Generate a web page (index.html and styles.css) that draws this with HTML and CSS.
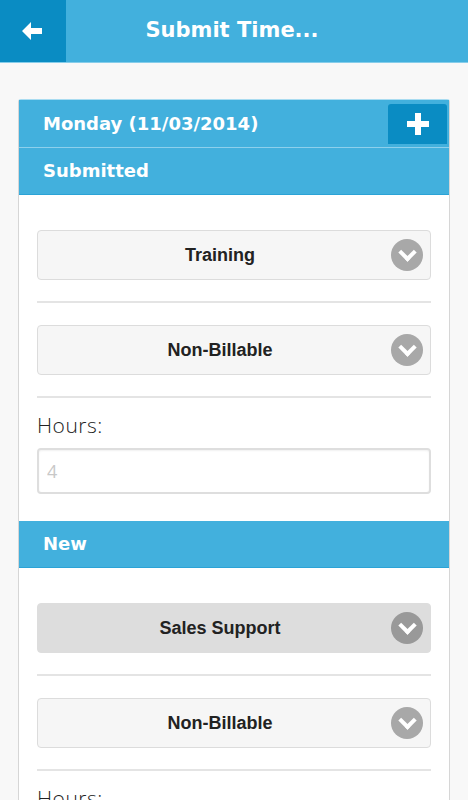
FILE: index.html
```html
<!DOCTYPE html>
<html lang="en">
<head>
  <meta charset="UTF-8" />
  <meta name="viewport" content="width=device-width, initial-scale=1.0" />
  <title>Submit Time</title>
  <link rel="stylesheet" href="styles.css">
</head>
<body>
  <header class="topbar">
    <a class="back" href="#">
      <svg width="22" height="20" viewBox="0 0 22 20"><path d="M10 1 L1 10 L10 19 L10 13 L21 13 L21 7 L10 7 Z" fill="#fff"/></svg>
    </a>
    <h1>Submit Time...</h1>
  </header>

  <div class="card">
    <div class="day">
      <span>Monday (11/03/2014)</span>
      <button class="add">
        <svg width="22" height="22" viewBox="0 0 22 22"><path d="M8 0h6v8h8v6h-8v8H8v-8H0V8h8z" fill="#fff"/></svg>
      </button>
    </div>

    <div class="section">Submitted</div>
    <div class="entry">
      <div class="select"><span>Training</span><i class="chev"></i></div>
      <hr>
      <div class="select"><span>Non-Billable</span><i class="chev"></i></div>
      <hr class="before-hours">
      <label class="hours">Hours:</label>
      <input class="field" type="text" placeholder="4">
    </div>

    <div class="section">New</div>
    <div class="entry">
      <div class="select active"><span>Sales Support</span><i class="chev"></i></div>
      <hr>
      <div class="select"><span>Non-Billable</span><i class="chev"></i></div>
      <hr class="before-hours">
      <label class="hours">Hours:</label>
      <input class="field" type="text" placeholder="">
    </div>
  </div>
</body>
</html>
```

FILE: styles.css
```css
body {
  margin: 0;
  background: #f8f8f8;
  font-family: "DejaVu Sans", "Open Sans", sans-serif;
  color: #222;
}
.topbar {
  display: flex;
  height: 62px;
  background: #42b0dd;
  border-bottom: 1px solid #86cdea;
}
.back {
  width: 64px;
  display: flex;
  align-items: center;
  justify-content: center;
  background: #0a8cc3;
  padding-right: 2px;
}
.topbar h1 {
  flex: 1;
  margin: 0;
  text-align: center;
  color: #fff;
  font-size: 21px;
  font-weight: 700;
  line-height: 60px;
  padding-right: 70px;
}
.card {
  margin: 36px 18px;
  background: #fff;
  border: 1px solid #d6d6d6;
  border-top-color: #a9dcf1;
  border-radius: 3px 3px 0 0;
}
.day {
  display: flex;
  align-items: center;
  justify-content: space-between;
  height: 47px;
  background: #42b0dd;
  border-bottom: 1px solid #8dd0ec;
  color: #fff;
  font-size: 18px;
  font-weight: 700;
  padding-left: 24px;
}
.add {
  width: 59px;
  height: 40px;
  margin-right: 2px;
  border: none;
  border-radius: 3px 3px 0 0;
  background: #0a8cc3;
  display: flex;
  align-items: center;
  justify-content: center;
  padding: 0;
}
.section {
  height: 46px;
  line-height: 45px;
  background: #42b0dd;
  border-bottom: 1px solid #2ba3d6;
  color: #fff;
  font-size: 18px;
  font-weight: 700;
  padding-left: 24px;
}
.entry {
  padding: 35px 18px 27px;
}
.select {
  position: relative;
  height: 48px;
  display: flex;
  align-items: center;
  justify-content: center;
  padding-right: 28px;
  background: #f6f6f6;
  border: 1px solid #dcdcdc;
  border-radius: 4px;
  font-family: "Liberation Sans", Arial, sans-serif;
  font-weight: 700;
  font-size: 18px;
  color: #222;
}
.select.active {
  background: #dddddd;
  border-color: #dddddd;
}
.chev {
  position: absolute;
  right: 7px;
  top: 8px;
  width: 32px;
  height: 32px;
  border-radius: 50%;
  background: #a8a8a8;
}
.chev::after {
  content: "";
  position: absolute;
  left: 10px;
  top: 7px;
  width: 9px;
  height: 9px;
  border-right: 4px solid #fff;
  border-bottom: 4px solid #fff;
  transform: rotate(45deg);
}
.select.active .chev {
  background: #999;
}
hr {
  border: none;
  border-top: 2px solid #e4e4e4;
  margin: 21px 0 22px;
}
hr.before-hours {
  margin-bottom: 0;
}
.hours {
  display: block;
  font-family: "Open Sans", sans-serif;
  font-size: 21px;
  font-weight: 300;
  color: #222;
  margin: 13px 0 9px;
  letter-spacing: 0.5px;
}
.field {
  display: block;
  box-sizing: border-box;
  width: 100%;
  height: 46px;
  border: 2px solid #dedede;
  border-radius: 4px;
  box-shadow: inset 0 1px 2px rgba(0,0,0,0.06);
  font-family: "Open Sans", sans-serif;
  font-size: 18px;
  padding: 0 8px;
}
.field::placeholder {
  color: #c8c8c8;
}
```
